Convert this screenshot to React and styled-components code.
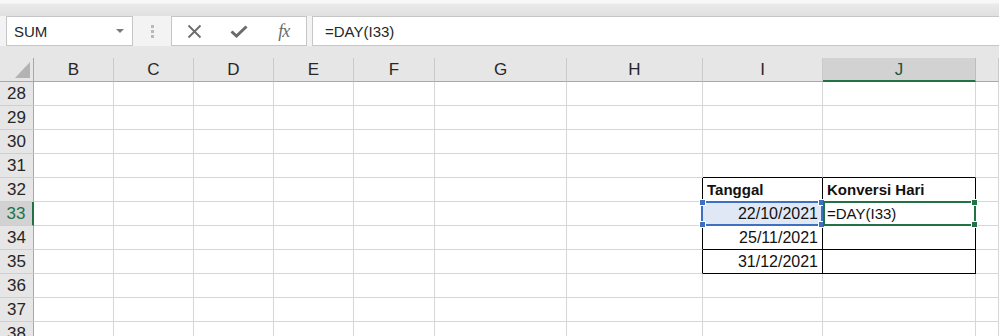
import React from "react";
import styled, { createGlobalStyle } from "styled-components";

const GlobalStyle = createGlobalStyle`
  html, body {
    margin: 0;
    padding: 0;
    background: #fff;
    overflow: hidden;
  }
  body {
    font-family: "Liberation Sans", Arial, sans-serif;
    color: #1f1f1f;
  }
`;

const Window = styled.div`
  width: 999px;
  height: 336px;
  overflow: hidden;
  display: flex;
  flex-direction: column;
  background: #fff;
`;

const TopStrip = styled.div`
  flex: none;
  height: 16px;
  background: linear-gradient(#f8f8f8 0, #f8f8f8 3px, #eaeaea 4px, #e0e0e0 100%);
`;

const FormulaBar = styled.div`
  flex: none;
  height: 30px;
  display: flex;
  align-items: stretch;
  background: #f3f3f3;
`;

const NameBox = styled.div`
  margin-left: 6px;
  width: 127px;
  box-sizing: border-box;
  border: 1px solid #c6c6c6;
  background: #fff;
  display: flex;
  align-items: center;
  justify-content: space-between;
  padding: 0 8px 0 7px;
  font-size: 15px;
  color: #262626;
`;

const Caret = styled.span`
  width: 0;
  height: 0;
  border-left: 4px solid transparent;
  border-right: 4px solid transparent;
  border-top: 4px solid #7a7a7a;
`;

const Grip = styled.div`
  width: 38px;
  display: flex;
  flex-direction: column;
  align-items: center;
  justify-content: center;
  gap: 2px;
  span {
    width: 3px;
    height: 3px;
    background: #b9b9b9;
  }
`;

const ButtonBox = styled.div`
  width: 136px;
  box-sizing: border-box;
  border: 1px solid #c6c6c6;
  background: #fff;
  display: flex;
  align-items: center;
`;

const ToolButton = styled.div`
  width: 45px;
  height: 100%;
  display: flex;
  align-items: center;
  justify-content: center;
  color: #6b6b6b;
`;

const Fx = styled.span`
  font-family: "Liberation Serif", "Times New Roman", serif;
  font-style: italic;
  font-size: 18px;
  color: #6b6b6b;
  letter-spacing: -1px;
`;

const FormulaInput = styled.div`
  margin-left: 5px;
  flex: 1;
  box-sizing: border-box;
  border: 1px solid #c6c6c6;
  border-right: none;
  background: #fff;
  display: flex;
  align-items: center;
  padding-left: 12px;
  font-size: 15px;
  color: #262626;
`;

const HeaderGap = styled.div`
  flex: none;
  height: 12px;
  background: #e6e6e6;
`;

const Sheet = styled.div`
  display: grid;
  grid-template-columns: 34px 80px 80px 80px 80px 81px 132px 136px 120px 153px 1fr;
  grid-auto-rows: 24px;
`;

const Corner = styled.div`
  background: #e6e6e6;
  border-right: 1px solid #a8a8a8;
  border-bottom: 1px solid #a8a8a8;
  display: flex;
  align-items: flex-end;
  justify-content: flex-end;
  padding: 0 3px 3px 0;
`;

const ColHeader = styled.div`
  box-sizing: border-box;
  background: ${(p) => (p.$active ? "#d2d2d2" : "#e6e6e6")};
  border-right: 1px solid ${(p) => (p.$active ? "#bdbdbd" : "#cacaca")};
  border-bottom: ${(p) => (p.$active ? "2px solid #217346" : "1px solid #a8a8a8")};
  color: ${(p) => (p.$active ? "#24543c" : "#262626")};
  font-size: 17px;
  display: flex;
  align-items: center;
  justify-content: center;
  padding-top: ${(p) => (p.$active ? "1px" : "0")};
`;

const RowHeader = styled.div`
  box-sizing: border-box;
  background: ${(p) => (p.$active ? "#d2d2d2" : "#e6e6e6")};
  border-right: ${(p) => (p.$active ? "2px solid #217346" : "1px solid #a8a8a8")};
  border-bottom: 1px solid #cfcfcf;
  color: ${(p) => (p.$active ? "#217346" : "#262626")};
  font-size: 17px;
  display: flex;
  align-items: center;
  justify-content: center;
`;

const Cell = styled.div`
  position: relative;
  box-sizing: border-box;
  border-right: 1px solid ${(p) => p.$right || "#d6d6d6"};
  border-bottom: 1px solid ${(p) => p.$bottom || "#d6d6d6"};
  background: ${(p) => p.$fill || "transparent"};
  display: flex;
  align-items: center;
  justify-content: ${(p) => (p.$align === "right" ? "flex-end" : "flex-start")};
  padding: 0 ${(p) => (p.$align === "right" ? "4px" : "3px")} 0 4px;
  font-size: ${(p) => (p.$align === "right" ? "16px" : "15px")};
  font-weight: ${(p) => (p.$bold ? 700 : 400)};
  color: #111;
  white-space: nowrap;
`;

const Frame = styled.div`
  position: absolute;
  z-index: 2;
  top: -1px;
  bottom: -1px;
  left: ${(p) => p.$left}px;
  right: -1px;
  border: 2px solid ${(p) => p.$color};
  pointer-events: none;
`;

const Handle = styled.span`
  position: absolute;
  width: 5px;
  height: 5px;
  background: ${(p) => p.$color};
  border: 1px solid #fff;
  ${(p) => (p.$top ? "top: -4px;" : "bottom: -4px;")}
  ${(p) => (p.$leftSide ? "left: -4px;" : "right: -4px;")}
`;

const columns = ["B", "C", "D", "E", "F", "G", "H", "I", "J", ""];
const rowNumbers = [28, 29, 30, 31, 32, 33, 34, 35, 36, 37, 38];

const values = {
  "I32": { text: "Tanggal", bold: true },
  "J32": { text: "Konversi Hari", bold: true },
  "I33": { text: "22/10/2021", align: "right" },
  "J33": { text: "=DAY(I33)" },
  "I34": { text: "25/11/2021", align: "right" },
  "I35": { text: "31/12/2021", align: "right" },
};

const BLUE = "#3f6fc0";
const GREEN = "#217346";

function borders(col, row) {
  const inTable = (c, r) => (c === "I" || c === "J") && r >= 32 && r <= 35;
  const next = columns[columns.indexOf(col) + 1];
  const right = inTable(col, row) || inTable(next, row) ? "#000" : null;
  const bottom = inTable(col, row) || inTable(col, row + 1) ? "#000" : null;
  return { right, bottom };
}

function CornerMark() {
  return (
    <svg width="15" height="16" viewBox="0 0 15 16">
      <polygon points="15,0 15,16 0,16" fill="#b3b3b3" />
    </svg>
  );
}

function CloseIcon() {
  return (
    <svg width="15" height="15" viewBox="0 0 15 15">
      <path d="M1.5 1.5 L13.5 13.5 M13.5 1.5 L1.5 13.5" stroke="#6b6b6b" strokeWidth="1.8" fill="none" />
    </svg>
  );
}

function CheckIcon() {
  return (
    <svg width="18" height="13" viewBox="0 0 18 13">
      <path d="M1.5 6.5 L6.5 11 L16.5 1.5" stroke="#6b6b6b" strokeWidth="3" fill="none" />
    </svg>
  );
}

function SheetCell({ col, row }) {
  const key = col + row;
  const v = values[key] || {};
  const { right, bottom } = borders(col, row);
  const isRef = key === "I33";
  const isActive = key === "J33";
  return (
    <Cell $right={right} $bottom={bottom} $align={v.align} $bold={v.bold} $fill={isRef ? "#e1e8f5" : null}>
      {v.text}
      {isRef && (
        <Frame $color={BLUE} $left={-2}>
          <Handle $color={BLUE} $top $leftSide />
          <Handle $color={BLUE} $top />
          <Handle $color={BLUE} $leftSide />
          <Handle $color={BLUE} />
        </Frame>
      )}
      {isActive && (
        <Frame $color={GREEN} $left={0}>
          <Handle $color={GREEN} $top />
          <Handle $color={GREEN} />
        </Frame>
      )}
    </Cell>
  );
}

export default function App() {
  return (
    <Window>
      <GlobalStyle />
      <TopStrip />
      <FormulaBar>
        <NameBox>
          SUM
          <Caret />
        </NameBox>
        <Grip>
          <span />
          <span />
          <span />
        </Grip>
        <ButtonBox>
          <ToolButton>
            <CloseIcon />
          </ToolButton>
          <ToolButton>
            <CheckIcon />
          </ToolButton>
          <ToolButton>
            <Fx>fx</Fx>
          </ToolButton>
        </ButtonBox>
        <FormulaInput>=DAY(I33)</FormulaInput>
      </FormulaBar>
      <HeaderGap />
      <Sheet>
        <Corner>
          <CornerMark />
        </Corner>
        {columns.map((c, i) => (
          <ColHeader key={i} $active={c === "J"}>
            {c}
          </ColHeader>
        ))}
        {rowNumbers.map((r) => (
          <React.Fragment key={r}>
            <RowHeader $active={r === 33}>{r}</RowHeader>
            {columns.map((c, i) => (
              <SheetCell key={i} col={c} row={r} />
            ))}
          </React.Fragment>
        ))}
      </Sheet>
    </Window>
  );
}
